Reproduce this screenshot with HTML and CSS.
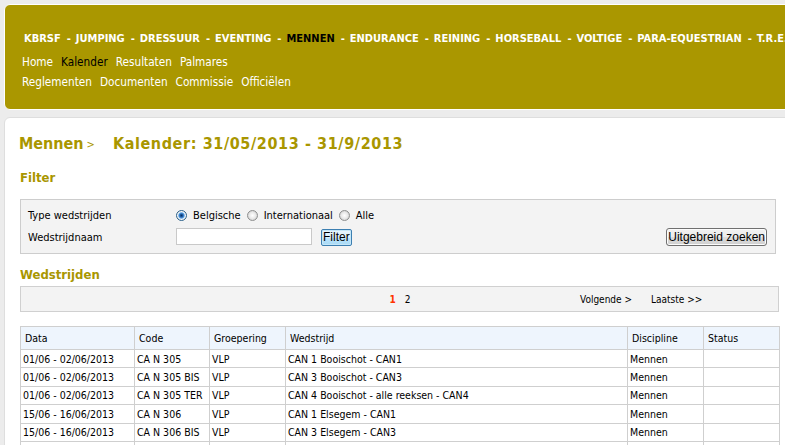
FILE: index.html
```html
<!DOCTYPE html>
<html lang="nl">
<head>
<meta charset="utf-8">
<title>Mennen - Kalender</title>
<link rel="stylesheet" href="styles.css">
</head>
<body>
<div class="page">
  <header class="header">
    <nav class="mainnav">
      <a href="#">KBRSF</a><span class="sep">-</span><a href="#">JUMPING</a><span class="sep">-</span><a href="#">DRESSUUR</a><span class="sep">-</span><a href="#">EVENTING</a><span class="sep">-</span><a href="#" class="current">MENNEN</a><span class="sep">-</span><a href="#">ENDURANCE</a><span class="sep">-</span><a href="#">REINING</a><span class="sep">-</span><a href="#">HORSEBALL</a><span class="sep">-</span><a href="#">VOLTIGE</a><span class="sep">-</span><a href="#">PARA-EQUESTRIAN</a><span class="sep">-</span><a href="#">T.R.E.C.</a>
    </nav>
    <div class="subnavs">
      <nav class="subnav">
        <a href="#">Home</a><a href="#" class="current">Kalender</a><a href="#">Resultaten</a><a href="#">Palmares</a>
      </nav>
      <nav class="subnav">
        <a href="#">Reglementen</a><a href="#">Documenten</a><a href="#">Commissie</a><a href="#">Officiëlen</a>
      </nav>
    </div>
  </header>

  <main class="content">
    <h1 class="title">Mennen<span class="gt">&gt;</span><span class="title-main">Kalender: 31/05/2013 - 31/9/2013</span></h1>

    <h2 class="section">Filter</h2>
    <form class="filter">
      <div class="frow">
        <span class="flabel">Type wedstrijden</span>
        <div class="fcontrols">
          <label class="opt"><input type="radio" name="type" class="radio" checked>Belgische</label>
          <label class="opt"><input type="radio" name="type" class="radio">Internationaal</label>
          <label class="opt"><input type="radio" name="type" class="radio">Alle</label>
        </div>
      </div>
      <div class="frow">
        <span class="flabel">Wedstrijdnaam</span>
        <div class="fcontrols">
          <input type="text" class="textbox">
          <button type="button" class="btn btn-focus">Filter</button>
          <button type="button" class="btn btn-adv">Uitgebreid zoeken</button>
        </div>
      </div>
    </form>

    <h2 class="section section-list">Wedstrijden</h2>
    <div class="pager">
      <span class="pager-side"></span>
      <span class="pages"><span class="page-current">1</span><a href="#">2</a></span>
      <span class="pager-nav"><a href="#">Volgende &gt;</a><a href="#">Laatste &gt;&gt;</a></span>
    </div>

    <table class="events">
      <colgroup>
        <col class="c-date"><col class="c-code"><col class="c-group"><col class="c-name"><col class="c-disc"><col class="c-status">
      </colgroup>
      <thead>
        <tr><th>Data</th><th>Code</th><th>Groepering</th><th>Wedstrijd</th><th>Discipline</th><th>Status</th></tr>
      </thead>
      <tbody>
        <tr><td>01/06 - 02/06/2013</td><td>CA N 305</td><td>VLP</td><td>CAN 1 Booischot - CAN1</td><td>Mennen</td><td></td></tr>
        <tr><td>01/06 - 02/06/2013</td><td>CA N 305 BIS</td><td>VLP</td><td>CAN 3 Booischot - CAN3</td><td>Mennen</td><td></td></tr>
        <tr><td>01/06 - 02/06/2013</td><td>CA N 305 TER</td><td>VLP</td><td>CAN 4 Booischot - alle reeksen - CAN4</td><td>Mennen</td><td></td></tr>
        <tr><td>15/06 - 16/06/2013</td><td>CA N 306</td><td>VLP</td><td>CAN 1 Elsegem - CAN1</td><td>Mennen</td><td></td></tr>
        <tr><td>15/06 - 16/06/2013</td><td>CA N 306 BIS</td><td>VLP</td><td>CAN 3 Elsegem - CAN3</td><td>Mennen</td><td></td></tr>
        <tr><td>&nbsp;</td><td>&nbsp;</td><td>&nbsp;</td><td>&nbsp;</td><td>&nbsp;</td><td>&nbsp;</td></tr>
      </tbody>
    </table>
  </main>
</div>
</body>
</html>
```

FILE: styles.css
```css
html, body {
  margin: 0;
  padding: 0;
  overflow: hidden;
}

body {
  background: #ececec;
  font-family: "DejaVu Sans Condensed", "DejaVu Sans", sans-serif;
  font-stretch: condensed;
  color: #000;
}

a {
  color: inherit;
  text-decoration: none;
}

.page {
  width: 800px;
  padding: 4px 0 0 4px;
}

/* ---------- header ---------- */
.header {
  height: 106px;
  box-sizing: border-box;
  background: #aa9700;
  border: 1px solid #fff;
  border-radius: 6px;
  padding: 27px 0 0 17px;
}

.mainnav {
  white-space: nowrap;
  overflow: hidden;
  font-size: 11px;
  font-weight: bold;
  line-height: 13px;
  color: #fff;
  padding-left: 2px;
}

.mainnav .sep {
  margin: 0 5px 0 6px;
}

.mainnav a.current {
  color: #000;
}

.subnavs {
  margin-top: 7px;
}

.subnav {
  display: flex;
  gap: 8px;
  font-size: 11.7px;
  line-height: 20px;
  color: #fff;
}

.subnav a.current {
  color: #000;
}

/* ---------- content ---------- */
.content {
  margin-top: 7px;
  background: #fff;
  border: 1px solid #dedede;
  border-radius: 6px;
  padding: 16px 0 40px 15px;
  min-height: 400px;
}

.title {
  margin: 0 0 0 -1px;
  font-size: 16px;
  line-height: 20px;
  font-weight: bold;
  color: #a99600;
}

.title .gt {
  font-size: 11px;
  font-weight: normal;
  margin: 0 18px 0 3px;
  position: relative;
  top: -1px;
}

.title-main {
  letter-spacing: 0.6px;
}

.section {
  margin: 14px 0 0 0;
  font-size: 13px;
  line-height: 16px;
  font-weight: bold;
  color: #a99600;
}

.section-list {
  margin-top: 13px;
}

/* ---------- filter ---------- */
.filter {
  margin-top: 13px;
  width: 756px;
  box-sizing: border-box;
  background: #f3f3f3;
  border: 1px solid #cdcdcd;
  padding: 4px 8px 5px 7px;
  font-size: 11px;
}

.frow {
  display: grid;
  grid-template-columns: 148px 1fr;
  align-items: center;
  height: 22px;
}

.fcontrols {
  display: flex;
  align-items: center;
}

.opt {
  display: flex;
  align-items: center;
  gap: 6px;
  margin-right: 6px;
}

.radio {
  appearance: none;
  -webkit-appearance: none;
  width: 11px;
  height: 11px;
  margin: 0;
  border: 1px solid #8e8f8f;
  border-radius: 50%;
  box-sizing: border-box;
  background: radial-gradient(circle at 50% 50%, #ffffff 0, #eaeaea 3px, #d2d2d2 5px);
}

.radio:checked {
  border-color: #2c628b;
  background: radial-gradient(circle at 50% 50%, #0b2e5c 0, #1f5fa8 1.5px, #62a5e6 2.8px, #d9ecfb 3.5px, #f5f5f5 4px, #d7d7d7 5px);
}

.textbox {
  width: 136px;
  height: 17px;
  box-sizing: border-box;
  margin: -1px 0 0 0;
  padding: 0 2px;
  border: 1px solid #c9c9c9;
  background: #fff;
  font: 11px "Liberation Sans", sans-serif;
}

.btn {
  font-family: "Liberation Sans", Arial, sans-serif;
  font-size: 12px;
  color: #000;
  padding: 0 1px;
  box-sizing: border-box;
  cursor: pointer;
  line-height: 14px;
  white-space: nowrap;
}

.btn-focus {
  margin-left: 9px;
  height: 17px;
  border: 1px solid #3c7fb1;
  border-radius: 2px;
  background: linear-gradient(#eaf6fd 0%, #d9f0fc 50%, #bee6fd 51%, #a7d9f5 100%);
  box-shadow: inset 0 0 0 1px #c5e6f8;
}

.btn-adv {
  margin-left: auto;
  height: 18px;
  padding: 0 1px;
  margin-top: -1px;
  border: 1px solid #707070;
  border-radius: 3px;
  background: linear-gradient(#f2f2f2 0%, #ebebeb 50%, #dddddd 51%, #cfcfcf 100%);
  box-shadow: inset 0 0 0 1px #fcfcfc;
}

/* ---------- pager ---------- */
.pager {
  margin-top: 3px;
  width: 759px;
  height: 26px;
  box-sizing: border-box;
  background: #f3f3f3;
  border: 1px solid #d0d0d0;
  display: grid;
  grid-template-columns: 252px 253px 1fr;
  align-items: center;
  font-size: 10px;
}

.pages {
  display: flex;
  justify-content: center;
  gap: 9px;
  padding-left: 1px;
}

.page-current {
  color: #ff3300;
  font-weight: bold;
}

.pager-nav {
  display: flex;
  gap: 19px;
  padding-left: 54px;
}

/* ---------- table ---------- */
.events {
  margin-top: 14px;
  width: 759px;
  border-collapse: collapse;
  table-layout: fixed;
  font-size: 10.5px;
}

.c-date { width: 114px; }
.c-code { width: 75px; }
.c-group { width: 76px; }
.c-name { width: 342px; }
.c-disc { width: 76px; }
.c-status { width: 76px; }

.events th,
.events td {
  border: 1px solid #cfcfcf;
  text-align: left;
  white-space: nowrap;
  overflow: hidden;
}

.events th {
  height: 22px;
  padding: 0 4px;
  background: #eef5fd;
  font-weight: normal;
}

.events td {
  height: 17.4px;
  padding: 0 2px;
  line-height: 12px;
}
```
